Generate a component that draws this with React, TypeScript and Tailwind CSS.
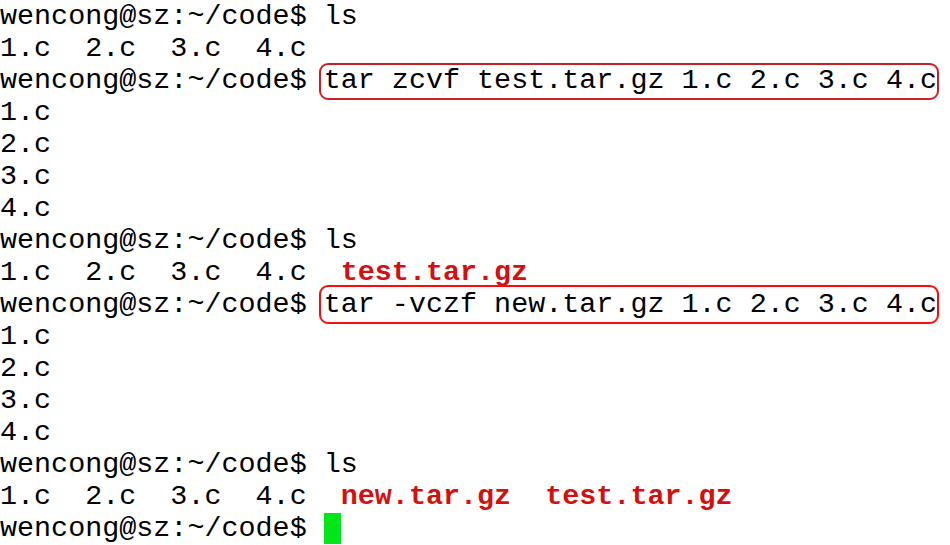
import React from "react";

const mono = "font-['Liberation_Mono','Courier_New',monospace]";

function Prompt() {
  return <span>wencong@sz:~/code$ </span>;
}

function Boxed({ children, tone }: { children: React.ReactNode; tone: "dark" | "bright" }) {
  return (
    <span className="relative inline-block">
      {children}
      {tone === "dark" ? (
        <span className="absolute -left-[5px] -right-[2px] -top-[2px] -bottom-[3px] rounded-[9px] border-2 border-[#cc1f24] pointer-events-none" />
      ) : (
        <span className="absolute -left-[5px] -right-[2px] -top-[4px] -bottom-[3px] rounded-[9px] border-2 border-[#ff0a0a] pointer-events-none" />
      )}
    </span>
  );
}

function Red({ children }: { children: React.ReactNode }) {
  return <span className="font-bold text-[#d30f0f]">{children}</span>;
}

export default function App() {
  const lines: React.ReactNode[] = [
    <><Prompt />ls</>,
    <>1.c  2.c  3.c  4.c</>,
    <><Prompt /><Boxed tone="dark">tar zcvf test.tar.gz 1.c 2.c 3.c 4.c</Boxed></>,
    <>1.c</>,
    <>2.c</>,
    <>3.c</>,
    <>4.c</>,
    <><Prompt />ls</>,
    <>1.c  2.c  3.c  4.c  <Red>test.tar.gz</Red></>,
    <><Prompt /><Boxed tone="bright">tar -vczf new.tar.gz 1.c 2.c 3.c 4.c</Boxed></>,
    <>1.c</>,
    <>2.c</>,
    <>3.c</>,
    <>4.c</>,
    <><Prompt />ls</>,
    <>1.c  2.c  3.c  4.c  <Red>new.tar.gz</Red>  <Red>test.tar.gz</Red></>,
    <><Prompt /><span className="inline-block w-[17px] h-[31px] align-top bg-[#00e61a]" /></>,
  ];

  return (
    <div className={`w-[950px] h-[545px] bg-white overflow-hidden pt-px ${mono} text-[28.4px] text-black`}>
      {lines.map((l, i) => (
        <div key={i} className="h-8 leading-8 whitespace-pre">
          {l}
        </div>
      ))}
    </div>
  );
}
